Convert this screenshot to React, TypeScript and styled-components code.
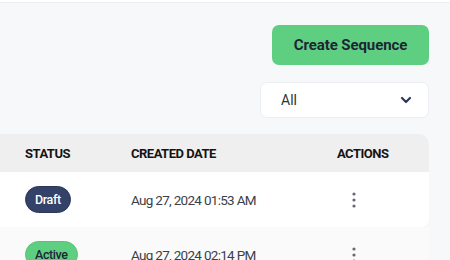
import styled, { createGlobalStyle } from "styled-components";

const Global = createGlobalStyle`
	html, body {
		margin: 0;
		padding: 0;
		background: #f7f8fa;
		font-family: Roboto, "Liberation Sans", sans-serif;
		overflow: hidden;
	}
	* { box-sizing: border-box; }
`;

const Page = styled.div`
	width: 450px;
	height: 260px;
	overflow: hidden;
	background: #f7f8fa;
`;

const TopBar = styled.div`
	height: 3px;
	background: #fff;
	border-bottom: 1px solid #eceef1;
`;

const Controls = styled.div`
	display: flex;
	flex-direction: column;
	align-items: flex-end;
	padding: 22px 21px 0 0;
	gap: 17px;
`;

const CreateButton = styled.button`
	width: 157px;
	height: 40px;
	border: none;
	border-radius: 7px;
	background: #5ecf81;
	color: #1e2535;
	font-family: Roboto, "Liberation Sans", sans-serif;
	font-size: 15px;
	font-weight: 700;
	letter-spacing: -0.1px;
	cursor: pointer;
`;

const Select = styled.div`
	display: flex;
	align-items: center;
	justify-content: space-between;
	width: 169px;
	height: 36px;
	padding: 0 16px 0 20px;
	background: #fff;
	border: 1px solid #eceef1;
	border-radius: 7px;
	font-size: 14px;
	color: #333;
`;

const Table = styled.div`
	margin: 16px 21px 0 -12px;
	border-radius: 10px 10px 0 0;
	overflow: hidden;
`;

const Row = styled.div<{ head?: boolean; shade?: boolean }>`
	display: grid;
	grid-template-columns: 106px 206px 1fr;
	align-items: center;
	padding-left: 37px;
	height: ${({ head }) => (head ? 38 : 55)}px;
	background: ${({ head, shade }) => (head ? "#efefef" : shade ? "#fafafa" : "#fff")};
	border-radius: ${({ head }) => (head ? "0" : "0 0 8px 0")};
`;

const HeadCell = styled.div`
	font-size: 13px;
	font-weight: 700;
	color: #141414;
	letter-spacing: -0.5px;
`;

const Badge = styled.span<{ tone: "draft" | "active" }>`
	display: inline-flex;
	align-items: center;
	justify-content: center;
	height: 27px;
	padding: 0 9px;
	border-radius: 14px;
	font-size: 12.5px;
	font-weight: 500;
	letter-spacing: -0.4px;
	background: ${({ tone }) => (tone === "draft" ? "#34426a" : "#5ecf81")};
	color: ${({ tone }) => (tone === "draft" ? "#fff" : "#1e2535")};
	border: 1px solid ${({ tone }) => (tone === "draft" ? "#2b3759" : "#55c276")};
`;

const DateCell = styled.div`
	font-size: 13.5px;
	letter-spacing: -0.7px;
	color: #3a3f4a;
`;

const KebabButton = styled.button`
	width: 34px;
	height: 30px;
	border: none;
	background: transparent;
	padding: 0;
	display: flex;
	align-items: center;
	justify-content: center;
	cursor: pointer;
`;

const Kebab = () => (
	<KebabButton aria-label="actions">
		<svg width="4" height="16" viewBox="0 0 4 16">
			<circle cx="2" cy="2" r="1.6" fill="#666b73" />
			<circle cx="2" cy="8" r="1.6" fill="#666b73" />
			<circle cx="2" cy="14" r="1.6" fill="#666b73" />
		</svg>
	</KebabButton>
);

const rows = [
	{ status: "Draft", tone: "draft" as const, date: "Aug 27, 2024 01:53 AM" },
	{ status: "Active", tone: "active" as const, date: "Aug 27, 2024 02:14 PM" },
];

export default function App() {
	return (
		<Page>
			<Global />
			<TopBar />
			<Controls>
				<CreateButton>Create Sequence</CreateButton>
				<Select>
					<span>All</span>
					<svg width="12" height="8" viewBox="0 0 12 8">
						<path d="M2 2l4 4 4-4" fill="none" stroke="#2d3a5a" strokeWidth="2.2" strokeLinecap="round" strokeLinejoin="round" />
					</svg>
				</Select>
			</Controls>
			<Table>
				<Row head>
					<HeadCell>STATUS</HeadCell>
					<HeadCell>CREATED DATE</HeadCell>
					<HeadCell>ACTIONS</HeadCell>
				</Row>
				{rows.map((r, i) => (
					<Row key={r.date} shade={i % 2 === 1}>
						<div>
							<Badge tone={r.tone}>{r.status}</Badge>
						</div>
						<DateCell>{r.date}</DateCell>
						<div>
							<Kebab />
						</div>
					</Row>
				))}
			</Table>
		</Page>
	);
}
